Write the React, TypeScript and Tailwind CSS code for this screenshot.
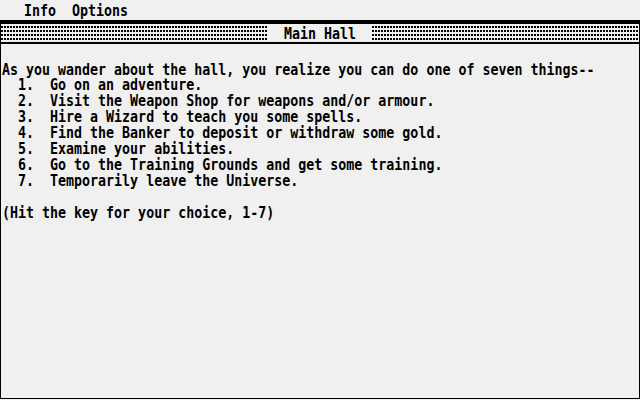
import React from 'react';

const lines = [
  'As you wander about the hall, you realize you can do one of seven things--',
  '  1.  Go on an adventure.',
  '  2.  Visit the Weapon Shop for weapons and/or armour.',
  '  3.  Hire a Wizard to teach you some spells.',
  '  4.  Find the Banker to deposit or withdraw some gold.',
  '  5.  Examine your abilities.',
  '  6.  Go to the Training Grounds and get some training.',
  '  7.  Temporarily leave the Universe.',
  '',
  '(Hit the key for your choice, 1-7)',
];

// GEM style dithered fill for the window title bar
const Dots: React.FC<{ id: string }> = ({ id }) => (
  <svg className="flex-1 h-full block" shapeRendering="crispEdges">
    <defs>
      <pattern id={id} width="3" height="4" patternUnits="userSpaceOnUse">
        <rect x="0" y="2" width="2" height="2" fill="#000" />
      </pattern>
    </defs>
    <rect width="100%" height="100%" fill={`url(#${id})`} />
  </svg>
);

const App: React.FC = () => {
  return (
    <div className="w-[640px] h-[400px] bg-[#f0f0f0] text-black overflow-hidden flex flex-col font-['DejaVu_Sans_Mono',monospace] text-[14px] leading-4 font-bold">
      {/* Menu bar */}
      <div className="h-5 shrink-0 pt-[2px]">
        <div className="whitespace-pre origin-left scale-x-[0.95] scale-y-[1.1]">   Info  Options</div>
      </div>

      {/* Window */}
      <div className="flex-1 mb-px flex flex-col border-x border-b border-black">
        {/* Title bar */}
        <div className="h-6 shrink-0 flex border-t-4 border-b-2 border-black">
          <Dots id="dl" />
          <div className="w-[104px] h-full flex items-center justify-center">
            <span className="whitespace-pre scale-x-[0.95] scale-y-[1.1]">Main Hall</span>
          </div>
          <Dots id="dr" />
        </div>

        {/* Content */}
        <div className="pt-[17px] pl-px">
          {lines.map((l, i) => (
            <div key={i} className="whitespace-pre h-4 origin-left scale-x-[0.95] scale-y-[1.1]">{l}</div>
          ))}
        </div>
      </div>
    </div>
  );
};

export default App;
